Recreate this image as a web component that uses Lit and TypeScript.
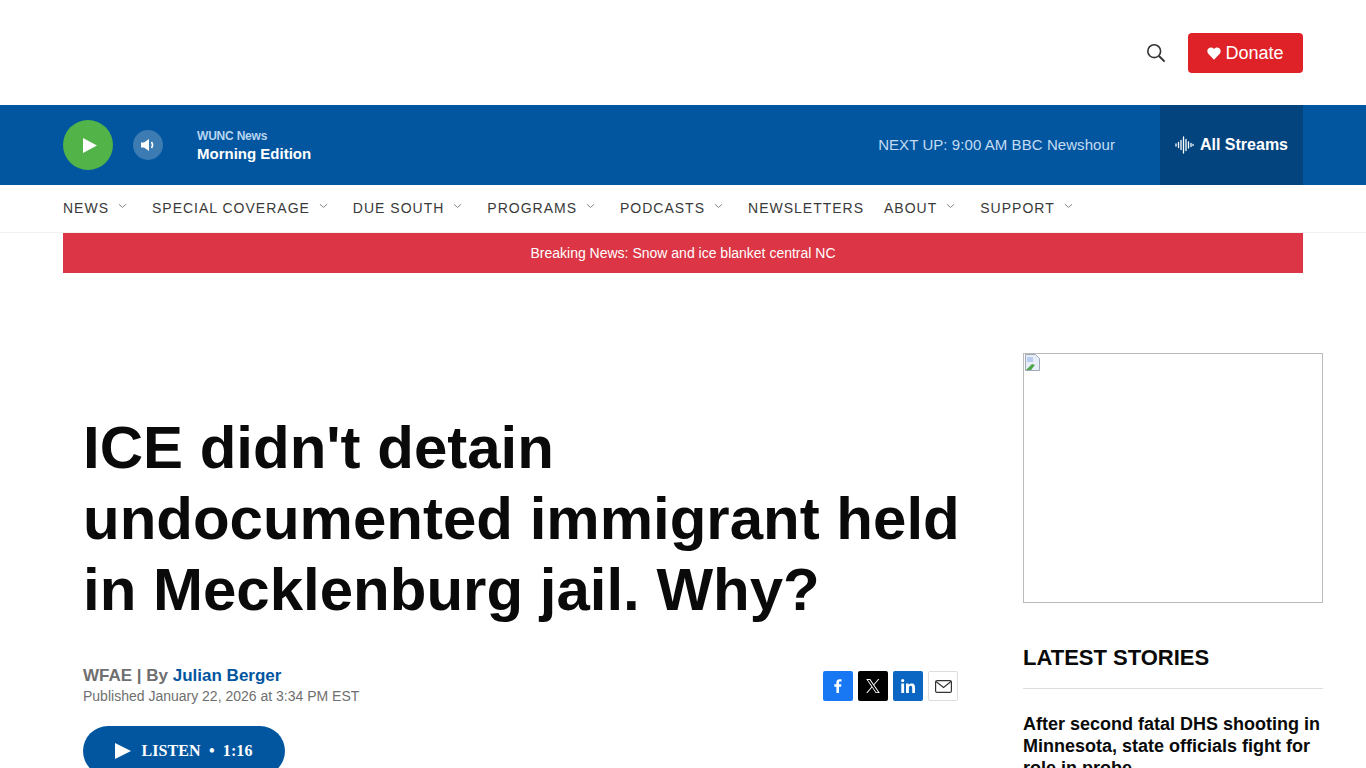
import { LitElement, html, css } from "lit";
import { customElement } from "lit/decorators.js";

const chev = html`<svg class="chev" viewBox="0 0 10 6" width="9" height="6"><path d="M1 1l4 3.6L9 1" fill="none" stroke="#777" stroke-width="1"/></svg>`;
const nav: [string, boolean][] = [
  ["NEWS", true], ["SPECIAL COVERAGE", true], ["DUE SOUTH", true], ["PROGRAMS", true],
  ["PODCASTS", true], ["NEWSLETTERS", false], ["ABOUT", true], ["SUPPORT", true],
];

@customElement("app-root")
export class AppRoot extends LitElement {
  static styles = css`
    :host { display: block; height: 768px; overflow: hidden; background: #fff; font-family: "Liberation Sans", Arial, sans-serif; color: #0a0a0a; }
    a { color: inherit; text-decoration: none; }
    .top { height: 105px; display: flex; align-items: center; justify-content: flex-end; padding-right: 63px; gap: 22px; }
    .search { display: block; }
    .donate { width: 115px; height: 40px; border-radius: 4px; background: #df2227; color: #fff; font-size: 18px; display: flex; align-items: center; justify-content: center; gap: 4px; padding-top: 1px; box-sizing: border-box; }
    .player { height: 80px; background: #02569f; display: flex; align-items: center; padding-left: 63px; padding-right: 63px; color: #fff; }
    .play { width: 50px; height: 50px; border-radius: 50%; background: #52b448; display: flex; align-items: center; justify-content: center; padding-left: 3px; box-sizing: border-box; }
    .vol { width: 30px; height: 30px; border-radius: 50%; background: #3d7cb3; margin-left: 20px; display: flex; align-items: center; justify-content: center; }
    .now { margin-left: 34px; display: flex; flex-direction: column; padding-top: 2px; }
    .now small { font-size: 12px; font-weight: 700; color: #b7d4f0; line-height: 15px; letter-spacing: -0.2px; }
    .now b { font-size: 15px; line-height: 20px; }
    .next { margin-left: auto; margin-right: 45px; font-size: 15px; color: #c4dcf3; padding-bottom: 2px; letter-spacing: 0.07px; }
    .streams { width: 143px; height: 80px; background: #03447e; display: flex; align-items: center; justify-content: center; gap: 6px; font-size: 16px; font-weight: 700; }
    .nav { border-bottom: 1px solid #f2f2f2; padding-left: 63px; padding-bottom: 2px; height: 45px; display: flex; align-items: center; font-size: 14px; letter-spacing: 1px; color: #3a3a3a; }
    .nav .item { display: flex; align-items: center; margin-right: 25px; }
    .nav .item.plain { margin-right: 20px; }
    .chev { margin-left: 9px; margin-bottom: 3px; }
    .breaking { margin: 0 63px; height: 40px; background: #dc3545; color: #fff; font-size: 14px; display: flex; align-items: center; justify-content: center; }
    .main { display: grid; grid-template-columns: 875px 300px; column-gap: 65px; padding: 80px 0 0 83px; }
    h1 { margin: 59px 0 0; font-size: 60px; line-height: 71px; font-weight: 700; color: #0a0a0a; white-space: nowrap; }
    .meta { display: flex; justify-content: space-between; align-items: center; margin-top: 41px; }
    .by { font-size: 17px; font-weight: 700; color: #6f6f6f; line-height: 20px; }
    .by a { color: #02569f; }
    .pub { font-size: 14px; color: #6f6f6f; line-height: 20px; }
    .share { display: flex; gap: 5px; }
    .sb { width: 30px; height: 30px; border-radius: 2px; display: flex; align-items: center; justify-content: center; box-sizing: border-box; }
    .fb { background: #1877f2; } .x { background: #000; } .li { background: #0a66c2; } .em { background: #fff; border: 1px solid #ddd; }
    .listen { margin-top: 20px; width: 202px; height: 50px; border-radius: 25px; background: #02569f; color: #fff; display: flex; align-items: center; justify-content: center; gap: 10px; font-family: "Liberation Serif", serif; font-weight: 700; font-size: 16px; letter-spacing: 0.1px; }
    .ad { width: 298px; height: 248px; border: 1px solid #bbb; }
    .ad svg { display: block; }
    h2 { margin: 42px 0 0; font-size: 22px; line-height: 26px; font-weight: 700; padding-bottom: 17px; border-bottom: 1px solid #ddd; }
    .story { margin-top: 24px; font-size: 18px; line-height: 22px; font-weight: 700; }
  `;
  render() {
    return html`
      <div class="top">
        <svg class="search" width="20" height="20" viewBox="0 0 20 20" fill="none" stroke="#333" stroke-width="1.6"><circle cx="8.2" cy="8.2" r="6.4"/><path d="M13 13l5.6 5.6" stroke-width="2"/></svg>
        <a class="donate"><svg width="14" height="13" viewBox="0 0 24 22"><path fill="#fff" d="M12 21.5 2.6 12C-.4 9 .1 4.400 3 2.200 6 0 9.800.6 12 3.500 14.200.6 18 0 21 2.200c2.900 2.200 3.400 6.800.4 9.800z"/></svg>Donate</a>
      </div>
      <div class="player">
        <div class="play"><svg width="16" height="15" viewBox="0 0 16 15"><path d="M1 0l14 7.500L1 15z" fill="#fff"/></svg></div>
        <div class="vol"><svg width="16" height="14" viewBox="0 0 16 14"><path d="M1 4.500h3L9 1v12L4 9.500H1z" fill="#fff"/><path d="M11.500 4c1.300 1.800 1.300 4.200 0 6" fill="none" stroke="#fff" stroke-width="1.500"/></svg></div>
        <div class="now"><small>WUNC News</small><b>Morning Edition</b></div>
        <div class="next">NEXT UP: 9:00 AM BBC Newshour</div>
        <div class="streams">
          <svg width="19" height="18" viewBox="0 0 19 18" stroke="#fff" stroke-width="1.300" stroke-linecap="round"><path d="M1 8v2M3.500 6.500v5M6 4.500v9M8.500 1v16M11 3.500v11M13.500 6v6M16 7.500v3M18 8.500v1"/></svg>
          All Streams
        </div>
      </div>
      <div class="nav">
        ${nav.map(([t, c]) => html`<a class="item ${c ? "" : "plain"}">${t}${c ? chev : ""}</a>`)}
      </div>
      <div class="breaking">Breaking News: Snow and ice blanket central NC</div>
      <div class="main">
        <div>
          <h1>ICE didn't detain<br>undocumented immigrant held<br>in Mecklenburg jail. Why?</h1>
          <div class="meta">
            <div>
              <div class="by">WFAE | By <a>Julian Berger</a></div>
              <div class="pub">Published January 22, 2026 at 3:34 PM EST</div>
            </div>
            <div class="share">
              <a class="sb fb"><svg width="8" height="14" viewBox="0 0 8 14"><path fill="#fff" d="M2.400 14V7.800H.3V5.300h2.100V3.500C2.400 1.300 3.700.2 5.600.2c.9 0 1.700.1 1.900.1v2.200H6.200c-1 0-1.200.5-1.200 1.200v1.600h2.400l-.3 2.500H5V14z"/></svg></a>
              <a class="sb x"><svg width="14" height="14" viewBox="0 0 24 24"><path fill="#fff" d="M14.200 10.200 22.900 0h-2.100l-7.500 8.800L7.300 0H.3l9.100 13.300L.3 24h2.100l8-9.300 6.300 9.300h7zm-2.800 3.300-.9-1.300L3.100 1.600h3.200l5.900 8.500.9 1.300 7.700 11.100h-3.200z"/></svg></a>
              <a class="sb li"><svg width="14" height="14" viewBox="0 0 14 14"><path fill="#fff" d="M.3 4.600h2.800V14H.3zM1.700 0a1.600 1.600 0 110 3.200 1.600 1.600 0 010-3.200zM5 4.600h2.700v1.300c.4-.8 1.400-1.500 2.800-1.500 3 0 3.500 1.900 3.500 4.400V14h-2.800V9.300c0-1.100 0-2.500-1.500-2.500s-1.800 1.200-1.800 2.400V14H5z"/></svg></a>
              <a class="sb em"><svg width="17" height="13" viewBox="0 0 17 13" fill="none" stroke="#333" stroke-width="1.200"><rect x=".6" y=".6" width="15.800" height="11.800" rx="1.500"/><path d="M1 1.500l7.500 6 7.500-6"/></svg></a>
            </div>
          </div>
          <a class="listen"><svg width="16" height="16" viewBox="0 0 16 16"><path d="M0 0l16 8-16 8z" fill="#fff"/></svg><span>LISTEN &nbsp;•&nbsp; 1:16</span></a>
        </div>
        <div>
          <div class="ad"><svg width="18" height="18" viewBox="0 0 18 18"><path d="M1.500 .5h10l4 4v12h-14z" fill="#e8eef8" stroke="#a0a8b8"/><path d="M2 16l6-6 3 1-4 5z" fill="#4fa64a"/><path d="M3 3h6v5H3z" fill="#b8cdf0"/></svg></div>
          <h2>LATEST STORIES</h2>
          <div class="story">After second fatal DHS shooting in Minnesota, state officials fight for role in probe</div>
        </div>
      </div>
    `;
  }
}
